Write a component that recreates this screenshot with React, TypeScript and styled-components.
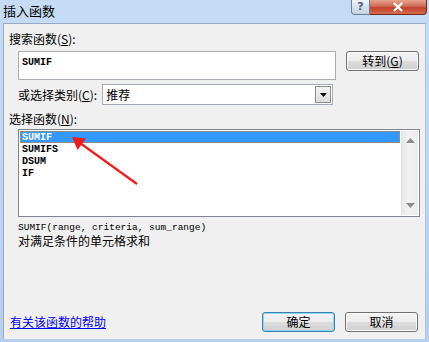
import React from "react";
import styled, { createGlobalStyle } from "styled-components";

const GlobalStyle = createGlobalStyle`
  html, body {
    margin: 0;
    padding: 0;
    background: #bcd3ee;
  }
  #root {
    width: 429px;
    height: 342px;
  }
`;

const cjk = `"Noto Sans CJK SC", "Liberation Sans", sans-serif`;
const mono = `"Liberation Mono", "DejaVu Sans Mono", monospace`;

const functions = ["SUMIF", "SUMIFS", "DSUM", "IF"];

const App = () => {
  return (
    <>
      <GlobalStyle />
      <Window>
        <TitleBar>
          <Title>插入函数</Title>
          <Caption>
            <HelpBtn>?</HelpBtn>
            <CloseBtn>
              <svg width="12" height="10" viewBox="0 0 12 10">
                <path d="M2 1 L10 9 M10 1 L2 9" stroke="#fff" strokeWidth="2.4" />
              </svg>
            </CloseBtn>
          </Caption>
        </TitleBar>
        <Content>
          <Label>
            搜索函数(<u>S</u>):
          </Label>
          <SearchRow>
            <SearchBox>SUMIF</SearchBox>
            <Button>
              转到(<u>G</u>)
            </Button>
          </SearchRow>
          <CategoryRow>
            <Label>
              或选择类别(<u>C</u>):
            </Label>
            <Select>
              <SelectText>推荐</SelectText>
              <DropBtn>
                <svg width="7" height="4" viewBox="0 0 7 4">
                  <path d="M0 0 H7 L3.5 4 Z" fill="#000" />
                </svg>
              </DropBtn>
            </Select>
          </CategoryRow>
          <ListLabel>
            选择函数(<u>N</u>):
          </ListLabel>
          <ListWrap>
            <ListBox>
              <Items>
                {functions.map((f, i) => (
                  <Item key={f} selected={i === 0}>
                    {f}
                  </Item>
                ))}
              </Items>
              <ScrollBar>
                <svg width="9" height="5" viewBox="0 0 9 5">
                  <path d="M0 5 L4.5 0 L9 5 Z" fill="#8a8a8a" />
                </svg>
                <svg width="9" height="5" viewBox="0 0 9 5">
                  <path d="M0 0 L4.5 5 L9 0 Z" fill="#8a8a8a" />
                </svg>
              </ScrollBar>
            </ListBox>
            <Arrow width="140" height="70" viewBox="0 0 140 70">
              <line x1="119" y1="55" x2="62" y2="14" stroke="#ee1c1c" strokeWidth="2.2" />
              <path d="M54 8 L68 9.4 L59.6 21 Z" fill="#ee1c1c" />
            </Arrow>
          </ListWrap>
          <Syntax>SUMIF(range, criteria, sum_range)</Syntax>
          <Desc>对满足条件的单元格求和</Desc>
          <Footer>
            <HelpLink>有关该函数的帮助</HelpLink>
            <Buttons>
              <Button primary>确定</Button>
              <Button>取消</Button>
            </Buttons>
          </Footer>
        </Content>
      </Window>
    </>
  );
};

export default App;

const Window = styled.div`
  width: 429px;
  height: 342px;
  display: flex;
  flex-direction: column;
  background: linear-gradient(#c6dcf4, #b7cfec);
  box-sizing: border-box;
`;

const TitleBar = styled.div`
  height: 23px;
  display: flex;
  justify-content: space-between;
  align-items: flex-start;
`;

const Title = styled.div`
  font-family: ${cjk};
  font-size: 13px;
  line-height: 15px;
  color: #000;
  padding: 3px 0 0 3px;
`;

const Caption = styled.div`
  display: flex;
  margin-right: 2px;
`;

const HelpBtn = styled.div`
  width: 17px;
  height: 14px;
  border: 1px solid #6d7f97;
  border-top: none;
  border-radius: 0 0 0 4px;
  background: linear-gradient(#f1f5fa, #d6e1ee 50%, #c3d3e6);
  color: #4d5d74;
  font-family: "DejaVu Sans", sans-serif;
  font-size: 11px;
  font-weight: bold;
  line-height: 14px;
  text-align: center;
`;

const CloseBtn = styled.div`
  width: 56px;
  height: 14px;
  border: 1px solid #6f2a20;
  border-top: none;
  border-left: none;
  border-radius: 0 0 4px 0;
  background: linear-gradient(#e6a492, #d16a52 45%, #c0412a 55%, #d86b4c);
  display: flex;
  align-items: center;
  justify-content: center;
`;

const Content = styled.div`
  flex: 1;
  margin: 0 3px 3px 3px;
  background: #f0f0f0;
  border: 1px solid #93a9c4;
  border-bottom: none;
  border-right-color: #aec3dc;
  display: flex;
  flex-direction: column;
  padding: 0 0 0 5px;
  position: relative;
`;

const Label = styled.div`
  font-family: ${cjk};
  font-size: 12px;
  line-height: 14px;
  color: #000;
  white-space: nowrap;
  margin-top: 8px;
`;

const SearchRow = styled.div`
  display: flex;
  align-items: flex-start;
  margin: 5px 0 0 9px;
`;

const SearchBox = styled.div`
  width: 318px;
  height: 29px;
  border: 1px solid #abadb3;
  background: #fff;
  font-family: ${mono};
  font-size: 10px;
  font-weight: bold;
  line-height: 12px;
  padding: 5px 0 0 3px;
  box-sizing: border-box;
`;

const Button = styled.div<{ primary?: boolean }>`
  width: 73px;
  height: 20px;
  margin-left: 10px;
  box-sizing: border-box;
  border: 1px solid ${({ primary }) => (primary ? "#3c7fb1" : "#707070")};
  border-radius: 3px;
  background: linear-gradient(#f4f4f4 0%, #ececec 50%, #dddddd 51%, #cfcfcf 100%);
  box-shadow: ${({ primary }) =>
    primary ? "inset 0 0 0 1px #8ed6f5" : "inset 0 0 0 1px #fbfbfb"};
  font-family: ${cjk};
  font-size: 12px;
  line-height: 18px;
  text-align: center;
  color: #000;
`;

const CategoryRow = styled.div`
  display: flex;
  align-items: center;
  margin: 4px 0 0 9px;
  gap: 3px;

  ${Label} {
    margin-top: 0;
  }
`;

const Select = styled.div`
  width: 231px;
  height: 21px;
  box-sizing: border-box;
  border: 1px solid #a5acb5;
  background: #fff;
  display: flex;
  align-items: center;
  justify-content: space-between;
  padding: 0 1px 0 3px;
  margin-left: 2px;
`;

const SelectText = styled.div`
  font-family: ${cjk};
  font-size: 12px;
  line-height: 14px;
`;

const DropBtn = styled.div`
  width: 16px;
  height: 17px;
  box-sizing: border-box;
  border: 1px solid #8d8d8d;
  background: linear-gradient(#f3f3f3, #dcdcdc);
  display: flex;
  align-items: center;
  justify-content: center;
`;

const ListLabel = styled(Label)`
  margin-top: 7px;
`;

const ListWrap = styled.div`
  position: relative;
  margin: 3px 0 0 9px;
  width: 402px;
`;

const ListBox = styled.div`
  height: 88px;
  box-sizing: border-box;
  border: 1px solid #828790;
  background: #fff;
  display: flex;
  padding: 1px;
`;

const Items = styled.div`
  flex: 1;
  display: flex;
  flex-direction: column;
`;

const Item = styled.div<{ selected?: boolean }>`
  height: 12px;
  box-sizing: border-box;
  padding-left: 1px;
  font-family: ${mono};
  font-size: 10px;
  font-weight: bold;
  line-height: 11px;
  color: ${({ selected }) => (selected ? "#fff" : "#000")};
  background: ${({ selected }) => (selected ? "#3399ff" : "transparent")};
  border: 1px dotted ${({ selected }) => (selected ? "#e0822c" : "transparent")};
  margin-right: 1px;
`;

const ScrollBar = styled.div`
  width: 17px;
  background: linear-gradient(90deg, #e8e8e8, #f2f2f2 40%, #ececec);
  border-left: 1px solid #e2e2e2;
  display: flex;
  flex-direction: column;
  justify-content: space-between;
  align-items: center;
  padding: 7px 0 7px;
  box-sizing: border-box;
`;

const Arrow = styled.svg`
  position: absolute;
  left: 0;
  top: 0;
  overflow: visible;
`;

const Syntax = styled.div`
  font-family: ${mono};
  font-size: 9.5px;
  line-height: 11px;
  margin: 5px 0 0 9px;
  color: #000;
`;

const Desc = styled.div`
  font-family: ${cjk};
  font-size: 12px;
  line-height: 15px;
  margin: 0 0 0 9px;
  color: #000;
`;

const Footer = styled.div`
  margin-top: auto;
  margin-bottom: 7px;
  display: flex;
  justify-content: space-between;
  align-items: center;
  padding-right: 7px;
`;

const HelpLink = styled.a`
  font-family: ${cjk};
  font-size: 12px;
  line-height: 14px;
  color: #0000ff;
  text-decoration: underline;
  margin-left: 1px;
  cursor: pointer;
`;

const Buttons = styled.div`
  display: flex;
`;
